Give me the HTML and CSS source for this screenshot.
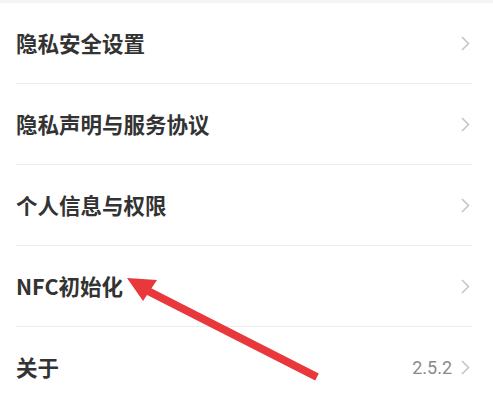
FILE: index.html
```html
<!DOCTYPE html>
<html lang="zh-CN">
  <head>
    <meta charset="UTF-8" />
    <meta name="viewport" content="width=device-width, initial-scale=1.0" />
    <title>设置</title>

    <link rel="stylesheet" href="styles.css">
  </head>
  <body>
    <div class="page">
      <div class="top-strip"></div>

      <ul class="menu">
        <li class="menu-item">
          <span class="label">隐私安全设置</span>
          <span class="extra">
            <svg class="chevron" viewBox="0 0 9 15"><polyline points="1,1 7.5,7.5 1,14" /></svg>
          </span>
        </li>
        <li class="menu-item">
          <span class="label">隐私声明与服务协议</span>
          <span class="extra">
            <svg class="chevron" viewBox="0 0 9 15"><polyline points="1,1 7.5,7.5 1,14" /></svg>
          </span>
        </li>
        <li class="menu-item">
          <span class="label">个人信息与权限</span>
          <span class="extra">
            <svg class="chevron" viewBox="0 0 9 15"><polyline points="1,1 7.5,7.5 1,14" /></svg>
          </span>
        </li>
        <li class="menu-item">
          <span class="label">NFC初始化</span>
          <span class="extra">
            <svg class="chevron" viewBox="0 0 9 15"><polyline points="1,1 7.5,7.5 1,14" /></svg>
          </span>
        </li>
        <li class="menu-item">
          <span class="label">关于</span>
          <span class="extra">
            <span class="version">2.5.2</span>
            <svg class="chevron" viewBox="0 0 9 15"><polyline points="1,1 7.5,7.5 1,14" /></svg>
          </span>
        </li>
      </ul>

      <!-- red annotation arrow pointing at the NFC row -->
      <svg class="annotation" viewBox="0 0 493 407">
        <line x1="146" y1="290" x2="317" y2="377" />
        <polygon points="127,278 157,280 143,301" />
      </svg>
    </div>
  </body>
</html>
```

FILE: styles.css
```css
* {
  margin: 0;
  padding: 0;
  box-sizing: border-box;
}
body {
  background-color: #fff;
  font-family: "Noto Sans CJK SC", "Noto Sans", sans-serif;
}

.page {
  position: relative;
  width: 493px;
  height: 407px;
  overflow: hidden;
}

.top-strip {
  height: 3px;
  background-color: #f5f5f5;
}

.menu {
  list-style: none;
  padding-left: 16px;
}

.menu-item {
  display: flex;
  align-items: center;
  justify-content: space-between;
  height: 81px;
  padding-right: 23px;
  border-bottom: 1px solid #ececec;
  margin-right: 21px;
}

.menu-item .label {
  font-size: 21.5px;
  font-weight: 600;
  color: #333;
  line-height: 1;
  margin-top: -1px;
}

.menu-item .extra {
  display: flex;
  align-items: center;
  gap: 9px;
  margin-right: -23px;
  padding-right: 2px;
}

.version {
  font-family: "Roboto", "Noto Sans", sans-serif;
  font-size: 18px;
  color: #8a8a8a;
}

.chevron {
  width: 9px;
  height: 15px;
  fill: none;
  stroke: #c4c4c4;
  stroke-width: 1.5;
}

.annotation {
  position: absolute;
  left: 0;
  top: 0;
  width: 493px;
  height: 407px;
}
.annotation line {
  stroke: #e8383b;
  stroke-width: 8;
}
.annotation polygon {
  fill: #e8383b;
}
```
